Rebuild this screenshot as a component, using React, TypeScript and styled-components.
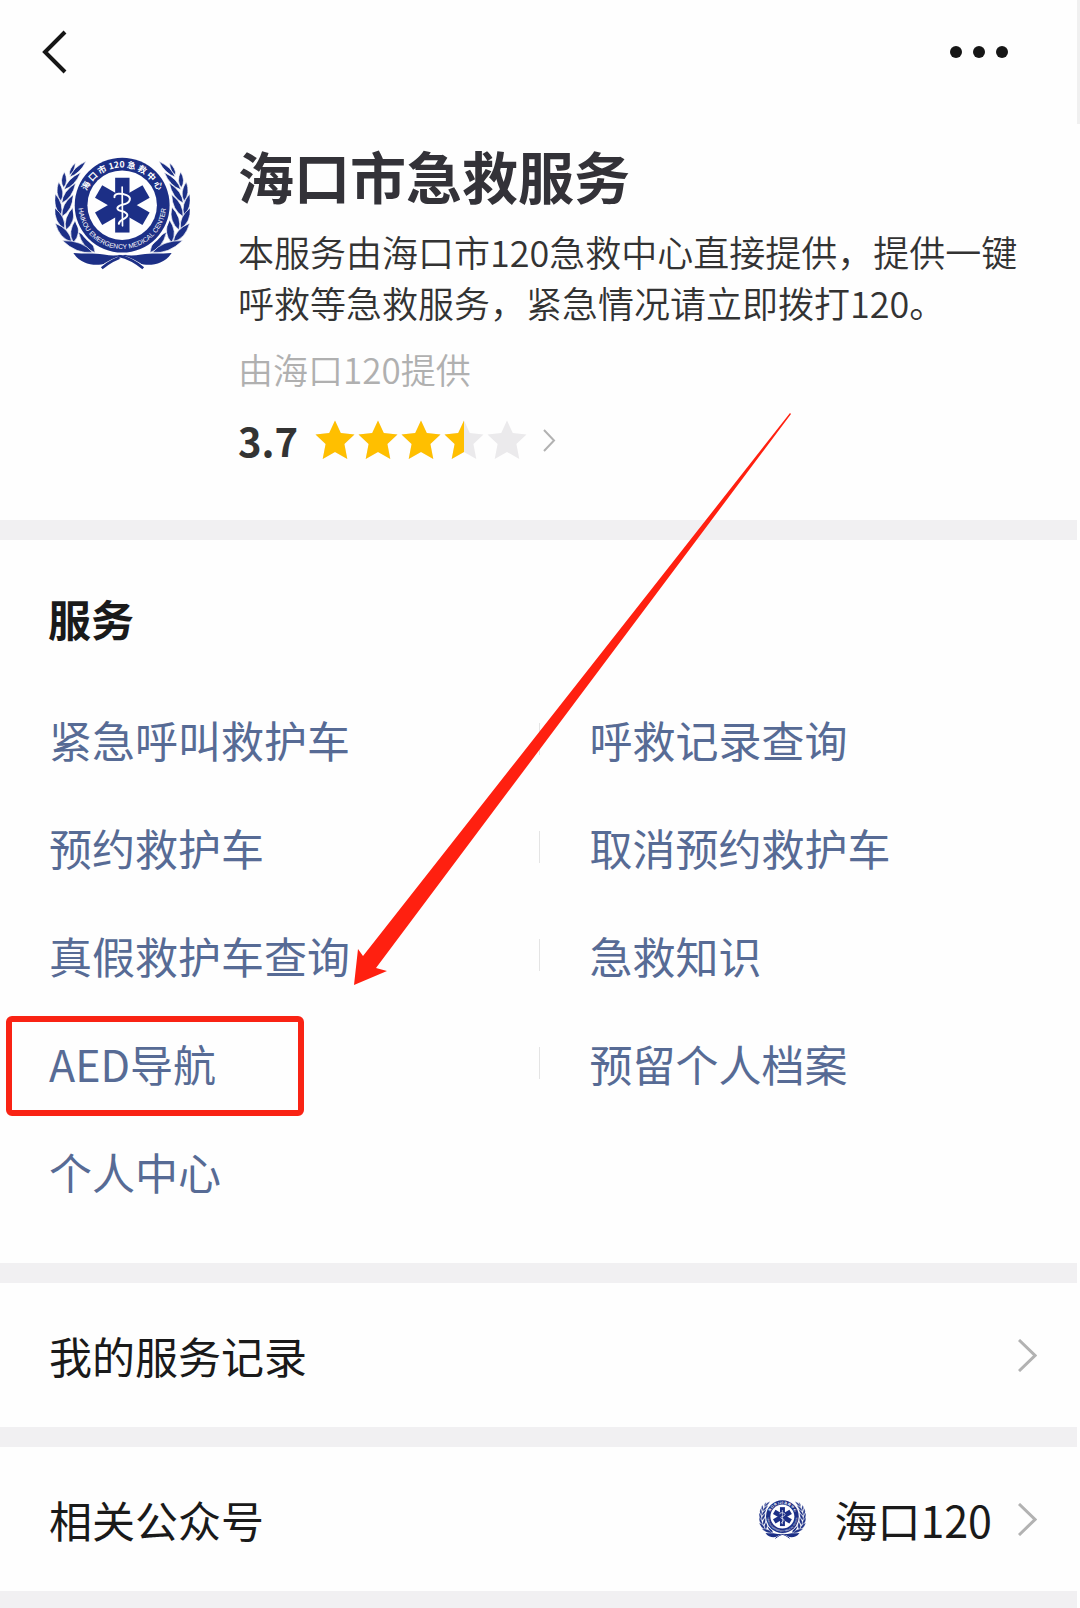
import React, { useId } from "react";
import styled, { createGlobalStyle } from "styled-components";

const GlobalStyle = createGlobalStyle`
  * { box-sizing: border-box; }
  body {
    margin: 0;
    background: #fefefe;
    font-family: "Noto Sans CJK SC", "Noto Sans", sans-serif;
    color: #1a1a1a;
  }
  button { font: inherit; color: inherit; background: none; border: 0; padding: 0; cursor: pointer; }
  a { color: inherit; text-decoration: none; }
  h1, h2, p, ul { margin: 0; padding: 0; }
  ul { list-style: none; }
  svg { display: block; flex: none; }
`;

const Page = styled.div`
  position: relative;
  display: flex;
  flex-direction: column;
  min-height: 100vh;
  overflow: hidden;
`;

const TopBar = styled.header`
  display: flex;
  align-items: center;
  justify-content: space-between;
  height: 103px;
  padding: 0 71px 0 42px;
`;

const ScrollThumb = styled.div`
  position: absolute;
  top: 0;
  right: 0;
  width: 3px;
  height: 124px;
  background: #f0f0f0;
`;

const Profile = styled.section`
  display: flex;
  gap: 48px;
  padding: 36px 48px 56px 55px;
`;

const ProfileLogo = styled.div`
  flex: none;
  padding-top: 18px;
`;

const ProfileText = styled.div`
  display: flex;
  flex-direction: column;
  align-items: flex-start;
  gap: 15px;
  min-width: 0;
`;

const Title = styled.h1`
  font-size: 56px;
  line-height: 72px;
  font-weight: 700;
  color: #333238;
`;

const Description = styled.p`
  font-size: 36px;
  line-height: 51px;
  font-weight: 350;
  color: #333;
`;

const Provider = styled.p`
  font-size: 35px;
  line-height: 51px;
  font-weight: 350;
  color: #b0b0b0;
`;

const Rating = styled.button`
  display: flex;
  align-items: center;
  height: 48px;
  margin-top: 7px;
`;

const Score = styled.span`
  width: 77px;
  text-align: left;
  font-size: 40px;
  line-height: 48px;
  font-weight: 600;
  color: #333;
`;

const Stars = styled.span`
  display: flex;
  gap: 3px;
  margin-right: 16px;
`;

const Separator = styled.div`
  flex: none;
  height: 20px;
  margin-right: 3px;
  background: #f1f0f2;
`;

const FooterFill = styled(Separator)`
  flex: 1 0 16px;
  height: auto;
`;

const Services = styled.section`
  padding: 46px 3px 38px 0;
`;

const SectionTitle = styled.h2`
  padding: 0 48px;
  font-size: 43px;
  line-height: 64px;
  font-weight: 700;
  margin-bottom: 35px;
`;

const ServiceGrid = styled.ul`
  display: grid;
  grid-template-columns: 1fr 1fr;
`;

const ServiceCell = styled.li`
  position: relative;
  display: flex;
  align-items: center;
  height: 108px;
  padding-left: 49px;

  &:nth-child(even)::before {
    content: "";
    width: 1px;
    height: 32px;
    margin: 0 50px 0 -49px;
    background: #e4e4e4;
  }
`;

const ServiceLink = styled.a`
  font-size: 43px;
  line-height: 64px;
  color: #576b95;
`;

const Highlight = styled.span`
  position: absolute;
  left: 6px;
  top: 7px;
  width: 298px;
  height: 100px;
  border: 6px solid #f92314;
  border-radius: 6px;
  pointer-events: none;
`;

const Row = styled.a`
  display: flex;
  align-items: center;
  height: 144px;
  padding: 0 43px 0 49px;
  font-size: 43px;
  line-height: 64px;
`;

const RowLabel = styled.span`
  flex: 1;
`;

const RowValue = styled.span`
  display: flex;
  align-items: center;
  gap: 28px;
  margin-right: 26px;
`;

const ArrowLayer = styled.svg`
  position: absolute;
  left: 354px;
  top: 413px;
  pointer-events: none;
`;

const NAVY = "#1c2f86";

type Leaf = [number, number, number, number, number];

// base x, base y, tip x, tip y, half thickness
const LEAVES: Leaf[] = [
  [120, 112, 169, 65, 14],
  [119, 106, 137, 70, 10],
  [103, 150, 153, 98, 16],
  [102, 144, 104, 96, 15],
  [96, 190, 138, 130, 18],
  [94, 184, 87, 126, 17],
  [97, 230, 131, 164, 20],
  [94, 226, 77, 162, 18],
  [109, 270, 132, 200, 21],
  [104, 266, 75, 204, 20],
  [131, 308, 139, 238, 23],
  [126, 306, 77, 250, 21],
  [196, 338, 146, 276, 22],
  [188, 337, 98, 302, 23],
];

function leafPath([bx, by, tx, ty, w]: Leaf) {
  const dx = tx - bx;
  const dy = ty - by;
  const len = Math.hypot(dx, dy);
  const nx = (-dy / len) * w;
  const ny = (dx / len) * w;
  const mx = bx + dx * 0.42;
  const my = by + dy * 0.42;
  return `M${bx} ${by}Q${mx + nx} ${my + ny} ${tx} ${ty}Q${mx - nx} ${my - ny} ${bx} ${by}Z`;
}

function Branch() {
  return (
    <g fill={NAVY}>
      {LEAVES.map((leaf, i) => (
        <path key={i} d={leafPath(leaf)} stroke="#fefefe" strokeWidth="2" />
      ))}
      <path d="M131 339C165 342 190 338 222 344C244 348 262 348 280 343L280 352C262 356 246 366 228 371C196 380 152 374 131 339Z" />
      <path d="M286 350C258 356 236 366 215 385" fill="none" stroke="#fefefe" strokeWidth="12" />
      <path d="M290 347C258 354 238 366 216 385" fill="none" stroke={NAVY} strokeWidth="8" />
    </g>
  );
}

function Emblem({ width, height }: { width: number; height: number }) {
  const id = useId();
  return (
    <svg width={width} height={height} viewBox="76 52 404 338" role="img" aria-label="海口120">
      <Branch />
      <g transform="translate(556 0) scale(-1 1)">
        <Branch />
      </g>
      <circle cx="277" cy="196" r="149" fill="#fefefe" />
      <circle cx="277" cy="196" r="142" fill={NAVY} />
      <circle cx="277" cy="196" r="104" fill="#fefefe" />
      <g fill={NAVY}>
        {[0, 60, 120].map((angle) => (
          <rect key={angle} x="256" y="114" width="43" height="164" transform={`rotate(${angle} 277.500 196)`} />
        ))}
      </g>
      <g fill="none" stroke="#fefefe" strokeLinecap="round">
        <path d="M277 142L278 258" strokeWidth="5" />
        <path
          d="M254 172C252 160 274 160 290 166C308 174 300 190 280 194C262 198 256 208 272 213C290 217 298 225 288 233C280 240 268 240 267 252"
          strokeWidth="6"
        />
      </g>
      <defs>
        <path id={`${id}top`} d="M164 220A115 115 0 1 1 390 220" />
        <path id={`${id}bottom`} d="M147 180A131 131 0 1 0 407 180" />
      </defs>
      <g fill="#fefefe" textAnchor="middle">
        <text fontSize="26" fontWeight="700" fontFamily='"Noto Sans CJK SC", sans-serif'>
          <textPath href={`#${id}top`} startOffset="50%">海 口 市 120 急 救 中 心</textPath>
        </text>
        <text fontSize="20" fontFamily='"Liberation Sans", sans-serif'>
          <textPath href={`#${id}bottom`} startOffset="50%">HAIKOU EMERGENCY MEDICAL CENTER</textPath>
        </text>
      </g>
    </svg>
  );
}

const STAR = "M20 0.500L25.800 13L39.500 14.500L29.400 24L32.300 39L20 32L7.700 39L10.600 24L0.500 14.500L14.200 13Z";

function Star({ fill }: { fill: number }) {
  return (
    <svg width="40" height="40" viewBox="0 0 40 40" aria-hidden="true">
      <path d={STAR} fill="#ebeaec" />
      <svg width={40 * fill} height="40">
        <path d={STAR} fill="#ffbf00" />
      </svg>
    </svg>
  );
}

function Chevron({ width, height, stroke }: { width: number; height: number; stroke: number }) {
  return (
    <svg width={width} height={height} fill="none" stroke="#b2b2b2" strokeWidth={stroke} aria-hidden="true">
      <path d={`M1 1L${width - 2} ${height / 2}L1 ${height - 1}`} />
    </svg>
  );
}

const STAR_FILLS = [1, 1, 1, 0.5, 0];

const SERVICES = [
  { name: "紧急呼叫救护车" },
  { name: "呼救记录查询" },
  { name: "预约救护车" },
  { name: "取消预约救护车" },
  { name: "真假救护车查询" },
  { name: "急救知识" },
  { name: "AED导航", marked: true },
  { name: "预留个人档案" },
  { name: "个人中心" },
];

export default function App() {
  return (
    <>
      <GlobalStyle />
      <Page>
        <TopBar>
          <button aria-label="返回">
            <svg width="26" height="44" fill="none" stroke="#161616" strokeWidth="4">
              <path d="M23 2L3 22L23 42" />
            </svg>
          </button>
          <button aria-label="更多">
            <svg width="60" height="14" fill="#161616">
              <circle cx="7" cy="7" r="6" />
              <circle cx="30" cy="7" r="6" />
              <circle cx="53" cy="7" r="6" />
            </svg>
          </button>
        </TopBar>
        <ScrollThumb />

        <Profile>
          <ProfileLogo>
            <Emblem width={135} height={113} />
          </ProfileLogo>
          <ProfileText>
            <Title>海口市急救服务</Title>
            <Description>
              本服务由海口市120急救中心直接提供，提供一键呼救等急救服务，紧急情况请立即拨打120。
            </Description>
            <Provider>由海口120提供</Provider>
            <Rating>
              <Score>3.7</Score>
              <Stars>
                {STAR_FILLS.map((fill, i) => (
                  <Star key={i} fill={fill} />
                ))}
              </Stars>
              <Chevron width={13} height={23} stroke={2} />
            </Rating>
          </ProfileText>
        </Profile>

        <Separator />

        <Services>
          <SectionTitle>服务</SectionTitle>
          <ServiceGrid>
            {SERVICES.map(({ name, marked }) => (
              <ServiceCell key={name}>
                <ServiceLink href="#">{name}</ServiceLink>
                {marked && <Highlight />}
              </ServiceCell>
            ))}
          </ServiceGrid>
        </Services>

        <Separator />

        <Row href="#">
          <RowLabel>我的服务记录</RowLabel>
          <Chevron width={19} height={33} stroke={3} />
        </Row>

        <Separator />

        <Row href="#">
          <RowLabel>相关公众号</RowLabel>
          <RowValue>
            <Emblem width={47} height={39} />
            海口120
          </RowValue>
          <Chevron width={19} height={33} stroke={3} />
        </Row>

        <FooterFill />

        <ArrowLayer width="438" height="573" aria-hidden="true">
          <path fill="#ff2010" d="M436 0L9 543L4 536L0 572L33 558L22 555L437 1Z" />
        </ArrowLayer>
      </Page>
    </>
  );
}
